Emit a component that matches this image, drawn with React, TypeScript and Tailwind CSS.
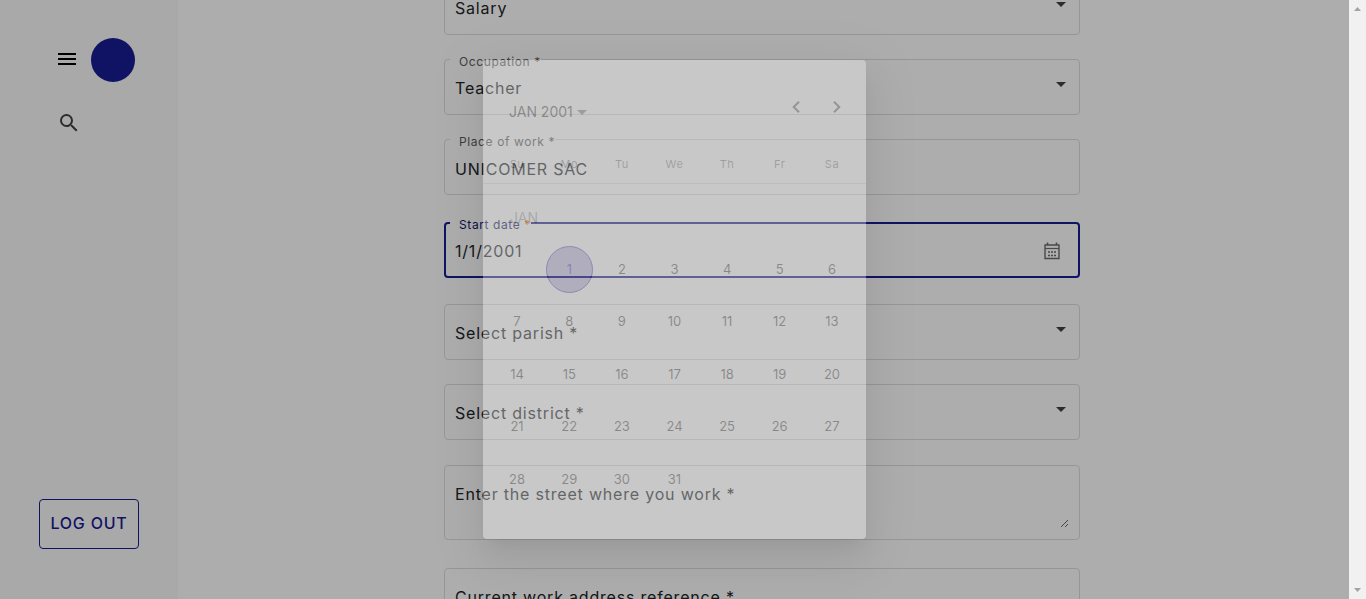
import React from 'react';

const options = {
  income: ['Salary'],
  occupation: ['Teacher'],
  parish: ['Select parish *'],
  district: ['Select district *'],
};

const weekdays = ['Su', 'Mo', 'Tu', 'We', 'Th', 'Fr', 'Sa'];

const weeks: (number | null)[][] = [
  [null, 1, 2, 3, 4, 5, 6],
  [7, 8, 9, 10, 11, 12, 13],
  [14, 15, 16, 17, 18, 19, 20],
  [21, 22, 23, 24, 25, 26, 27],
  [28, 29, 30, 31, null, null, null],
];

const textStyle = 'text-base tracking-wider text-[#212529]';

function Caret({ className = '' }: { className?: string }) {
  return (
    <svg viewBox="0 0 10 5" className={`h-[5px] w-[10px] shrink-0 ${className}`} aria-hidden="true">
      <path d="M0 0h10L5 5z" fill="currentColor" />
    </svg>
  );
}

function SelectBox({ id, name, items }: { id: string; name?: string; items: string[] }) {
  return (
    <div className="grid h-[54px] items-center">
      <select
        id={id}
        aria-label={name}
        className={`col-start-1 row-start-1 h-full w-full appearance-none bg-transparent px-[10px] pt-[2px] outline-none ${textStyle}`}
      >
        {items.map((item) => (
          <option key={item}>{item}</option>
        ))}
      </select>
      <Caret className="pointer-events-none col-start-1 row-start-1 mr-[13px] mb-[6px] justify-self-end text-[#3f4245]" />
    </div>
  );
}

function Outlined({ children }: { children: React.ReactNode }) {
  return <div className="rounded border border-[#dedede]">{children}</div>;
}

function Labelled({
  id,
  label,
  active = false,
  children,
}: {
  id: string;
  label: string;
  active?: boolean;
  children: React.ReactNode;
}) {
  return (
    <fieldset
      className={`-mt-[5px] min-w-0 rounded ${active ? 'border-2 border-[#181c93]' : 'border border-[#dedede]'}`}
    >
      <legend
        className={`pt-[5px] pl-[9px] text-xs leading-[6px] tracking-wider ${
          active ? 'ml-1 h-[12px] text-[#14166b]' : 'ml-[5px] h-[11px] text-[#5c5c5c]'
        }`}
      >
        <label htmlFor={id}>
          {label} <span className={active ? 'text-[#ff7a00]' : ''}>*</span>
        </label>
      </legend>
      <div className="-mt-[5px]">{children}</div>
    </fieldset>
  );
}

function CalendarIcon() {
  return (
    <svg viewBox="0 0 16 18" className="h-[18px] w-4" fill="none" stroke="currentColor" aria-hidden="true">
      <path d="M1 3h14v13.5H1z" strokeWidth="1.4" />
      <path d="M1 6.5h14" strokeWidth="1.2" />
      <path d="M3.5 0.5v2.5M12.5 0.5v2.5" strokeWidth="1.6" />
      <path d="M4 10h2M7 10h2M10 10h2M4 13.5h2M7 13.5h2M10 13.5h2" strokeWidth="1.6" />
    </svg>
  );
}

function Sidebar() {
  return (
    <aside className="flex w-[178px] shrink-0 flex-col justify-between bg-[#fafafa] pt-[38px] pb-[50px]">
      <div>
        <div className="flex h-11 items-center gap-3 pl-[55px]">
          <button aria-label="Menu">
            <svg viewBox="0 0 24 24" className="mb-[2px] block size-6" aria-hidden="true">
              <path d="M3 18h18v-2H3v2zm0-5h18v-2H3v2zm0-7v2h18V6H3z" />
            </svg>
          </button>
          <span className="size-11 rounded-full bg-[#181c93]" />
        </div>
        <button aria-label="Search" className="mt-[29px] ml-[57px] block text-[#3f4245]">
          <svg viewBox="0 0 24 24" className="size-6" fill="currentColor" aria-hidden="true">
            <path d="M15.5 14h-.79l-.28-.27A6.471 6.471 0 0 0 16 9.5 6.5 6.5 0 1 0 9.5 16c1.61 0 3.09-.59 4.23-1.57l.27.28v.79l5 4.99L20.49 19l-4.99-5zm-6 0C7.01 14 5 11.99 5 9.5S7.01 5 9.5 5 14 7.01 14 9.5 11.99 14 9.5 14z" />
          </svg>
        </button>
      </div>
      <button className="ml-[39px] h-[50px] w-[100px] rounded border border-[#181c93] pb-[2px] text-base font-medium tracking-wider whitespace-nowrap text-[#181c93]">
        LOG OUT
      </button>
    </aside>
  );
}

function TextArea({ label }: { label: string }) {
  return (
    <div className="px-[10px] pt-4 pb-[11px]">
      <textarea
        aria-label={label}
        placeholder={`${label} *`}
        className={`block h-[46px] w-full resize bg-transparent outline-none placeholder:text-[#212529] ${textStyle}`}
      />
    </div>
  );
}

function WorkForm() {
  return (
    <form className="mx-auto -mt-[21px] flex w-full max-w-[636px] flex-col">
      <Outlined>
        <SelectBox id="income" name="Salary" items={options.income} />
      </Outlined>
      <div className="mt-6">
        <Labelled id="occupation" label="Occupation">
          <SelectBox id="occupation" items={options.occupation} />
        </Labelled>
      </div>
      <div className="mt-6">
        <Labelled id="place" label="Place of work">
          <input
            id="place"
            defaultValue="UNICOMER SAC"
            className={`block h-[54px] w-full bg-transparent px-[10px] pt-1 outline-none ${textStyle}`}
          />
        </Labelled>
      </div>
      <div className="mt-[27px]">
        <Labelled id="start" label="Start date" active>
          <div className="flex h-[52px] items-center pr-[18px]">
            <input
              id="start"
              defaultValue="1/1/2001"
              className={`h-full min-w-0 flex-1 bg-transparent px-[9px] pt-[2px] outline-none ${textStyle}`}
            />
            <button type="button" aria-label="Open calendar" className="mt-[2px] text-[#6c6c6c]">
              <CalendarIcon />
            </button>
          </div>
        </Labelled>
      </div>
      <div className="mt-[26px]">
        <Outlined>
          <SelectBox id="parish" name="Select parish" items={options.parish} />
        </Outlined>
      </div>
      <div className="mt-6">
        <Outlined>
          <SelectBox id="district" name="Select district" items={options.district} />
        </Outlined>
      </div>
      <div className="mt-[25px]">
        <Outlined>
          <TextArea label="Enter the street where you work" />
        </Outlined>
      </div>
      <div className="mt-7">
        <Outlined>
          <TextArea label="Current work address reference" />
        </Outlined>
      </div>
    </form>
  );
}

function Calendar() {
  return (
    <div
      role="dialog"
      aria-label="JAN 2001"
      className="h-[479px] w-[383px] rounded bg-white px-2 text-[13px] text-black/75 opacity-33 shadow-[0_11px_15px_-7px_rgba(0,0,0,0.2),0_24px_38px_3px_rgba(0,0,0,0.14),0_9px_46px_8px_rgba(0,0,0,0.12)]"
    >
      <div className="flex h-[92px] items-center pr-px pl-[18px]">
        <button className="mt-3 flex items-center gap-1 text-sm">
          JAN 2001
          <Caret className="text-black/50" />
        </button>
        <div className="mt-px ml-auto flex gap-px text-black/60">
          <button aria-label="Previous month" className="flex h-10 w-10 items-center justify-center">
            <svg viewBox="0 0 8 12" className="h-3 w-2" fill="none" stroke="currentColor" strokeWidth="2" aria-hidden="true">
              <path d="M7 .7 1.7 6 7 11.3" />
            </svg>
          </button>
          <button aria-label="Next month" className="flex h-10 w-10 items-center justify-center">
            <svg viewBox="0 0 8 12" className="h-3 w-2" fill="none" stroke="currentColor" strokeWidth="2" aria-hidden="true">
              <path d="M1 .7 6.3 6 1 11.3" />
            </svg>
          </button>
        </div>
      </div>
      <table className="-mx-2 w-[383px] table-fixed border-separate border-spacing-0 text-center">
        <thead>
          <tr className="h-8 text-[11px] tracking-wider text-black/50">
            {weekdays.map((day) => (
              <th
                key={day}
                className="border-b border-black/12 pt-0 pb-[6px] align-middle font-normal first:w-[60px] first:pl-2 last:w-[60px] last:pr-2"
              >
                {day}
              </th>
            ))}
          </tr>
        </thead>
        <tbody>
          <tr className="h-[59px]">
            <td colSpan={7} className="pt-2 pl-[27px] text-left text-sm text-black/40">
              JAN
            </td>
          </tr>
          {weeks.map((week, row) => (
            <tr key={row} className="h-[52px] even:h-[53px]">
              {week.map((day, column) => (
                <td key={column} className="p-0 first:pl-2 last:pr-2">
                  {day === 1 ? (
                    <button className="size-[47px] rounded-full border border-[#4a40c0] bg-[#b9b0e0] align-middle text-[#5524cb]">
                      {day}
                    </button>
                  ) : (
                    day && <button className="size-[47px] align-middle">{day}</button>
                  )}
                </td>
              ))}
            </tr>
          ))}
        </tbody>
      </table>
    </div>
  );
}

function ScrollRail() {
  return (
    <div className="flex w-[17px] shrink-0 flex-col items-center justify-between bg-[#f1f1f1] py-[7px] text-[#a3a3a3]">
      <svg viewBox="0 0 7 4" className="h-1 w-[7px]" aria-hidden="true">
        <path d="M0 4h7L3.5 0z" fill="currentColor" />
      </svg>
      <svg viewBox="0 0 7 4" className="h-1 w-[7px]" aria-hidden="true">
        <path d="M0 0h7L3.5 4z" fill="currentColor" />
      </svg>
    </div>
  );
}

export default function App() {
  return (
    <div className="flex h-screen overflow-hidden bg-white font-['Inter',sans-serif]">
      <div className="relative flex min-w-0 flex-1 overflow-hidden">
        <Sidebar />
        <main className="min-w-0 flex-1 overflow-hidden pr-[3px]">
          <WorkForm />
        </main>
        <div className="absolute inset-0 flex items-center justify-center bg-black/32">
          <Calendar />
        </div>
      </div>
      <ScrollRail />
    </div>
  );
}
